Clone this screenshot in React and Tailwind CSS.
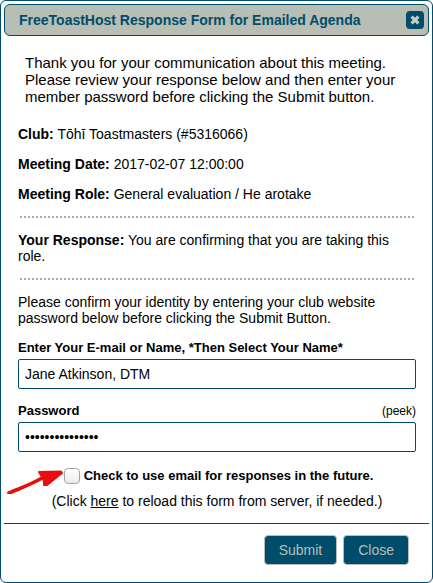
import { useState } from 'react';

const DETAILS = [
  { label: 'Club:', value: 'Tōhī Toastmasters (#5316066)' },
  { label: 'Meeting Date:', value: '2017-02-07 12:00:00' },
  { label: 'Meeting Role:', value: 'General evaluation / He arotake' },
];

function CloseIcon() {
  return (
    <svg width="12" height="12" viewBox="0 0 12 12" aria-hidden="true">
      <path d="M2.6 2.6 L9.4 9.4 M9.4 2.6 L2.6 9.4" stroke="#c9cdc5" strokeWidth="3.2" />
    </svg>
  );
}

function RedArrow() {
  return (
    <svg
      className="absolute right-full top-1/2 -translate-y-1/2"
      width="60"
      height="36"
      viewBox="0 0 60 36"
      aria-hidden="true"
    >
      <path d="M5 35 C14 31 26 27 38 20" fill="none" stroke="#e90d0d" strokeWidth="3.6" strokeLinecap="round" />
      <path
        d="M35 14 L57 13.5 L58 15 L43 27 L40 27 L40 23 L38 19 Z"
        fill="#e90d0d"
        stroke="#e90d0d"
        strokeWidth="2"
        strokeLinejoin="round"
      />
    </svg>
  );
}

function Separator() {
  return <hr className="mx-0.5 border-0 border-t-2 border-dotted border-[#aaaaaa]" />;
}

export default function App() {
  const [name, setName] = useState('Jane Atkinson, DTM');
  const [password, setPassword] = useState('toastmasters123');
  const [peek, setPeek] = useState(false);
  const [useEmail, setUseEmail] = useState(false);

  return (
    <div
      role="dialog"
      aria-labelledby="dialog-title"
      className="rounded-md border border-[#004d6b] bg-white p-[3px] font-['Liberation_Sans',Arial,sans-serif] text-sm leading-4 text-black"
    >
      <header className="flex h-8 items-center justify-between rounded-md border border-[#004d6b] bg-[#b9beb4] pr-1 pl-3.5">
        <h1 id="dialog-title" className="text-sm leading-4 font-bold text-[#004d6b]">
          FreeToastHost Response Form for Emailed Agenda
        </h1>
        <button
          type="button"
          aria-label="Close dialog"
          className="flex size-[18px] items-center justify-center rounded-sm bg-[#004d6b]"
        >
          <CloseIcon />
        </button>
      </header>

      <form onSubmit={(e) => e.preventDefault()}>
        <div className="pt-[18px] pr-[13px] pb-3.5 pl-3.5">
          <p className="px-[7px] text-[15px] leading-[17px]">
            Thank you for your communication about this meeting. Please review your response below and then enter your
            member password before clicking the Submit button.
          </p>

          <div className="mt-[21px] mb-3.5 space-y-3.5">
            {DETAILS.map((item) => (
              <p key={item.label}>
                <b>{item.label}</b> {item.value}
              </p>
            ))}
          </div>

          <Separator />
          <p className="my-3.5">
            <b>Your Response:</b> You are confirming that you are taking this role.
          </p>
          <Separator />

          <p className="my-3.5">
            Please confirm your identity by entering your club website password below before clicking the Submit Button.
          </p>

          <label htmlFor="member-name" className="block text-[13px] font-bold">
            Enter Your E-mail or Name, *Then Select Your Name*
          </label>
          <input
            id="member-name"
            type="text"
            value={name}
            onChange={(e) => setName(e.target.value)}
            className="mt-[3px] block h-[30px] w-full rounded-xs border border-[#004d6b] px-1.5 outline-none"
          />

          <div className="mt-3.5 flex items-center justify-between">
            <label htmlFor="member-password" className="text-[13px] font-bold">
              Password
            </label>
            <button type="button" onClick={() => setPeek(!peek)} className="text-xs leading-4">
              (peek)
            </button>
          </div>
          <input
            id="member-password"
            type={peek ? 'text' : 'password'}
            value={password}
            onChange={(e) => setPassword(e.target.value)}
            className="mt-[3px] block h-[30px] w-full rounded-xs border border-[#004d6b] px-1.5 outline-none"
          />

          <div className="mt-4 flex justify-center pl-[3px]">
            <div className="relative flex items-center gap-1">
              <RedArrow />
              <input
                id="use-email"
                type="checkbox"
                checked={useEmail}
                onChange={(e) => setUseEmail(e.target.checked)}
                className="size-4 appearance-none rounded-sm border border-[#a3a3a3] bg-linear-to-b from-white to-[#ececec] checked:bg-[#004d6b]"
              />
              <label htmlFor="use-email" className="text-[13px] font-bold">
                Check to use email for responses in the future.
              </label>
            </div>
          </div>
          <p className="mt-[9px] text-center">
            (Click{' '}
            <a href="#reload" className="underline">
              here
            </a>{' '}
            to reload this form from server, if needed.)
          </p>
        </div>

        <footer className="flex justify-end gap-1.5 border-t border-[#004d6b] pt-[11px] pr-5 pb-3.5">
          <button
            type="submit"
            className="h-[30px] rounded-sm border border-[#b9beb4] bg-[#004d6b] px-3.5 text-[#b9beb4]"
          >
            Submit
          </button>
          <button
            type="button"
            className="h-[30px] rounded-sm border border-[#b9beb4] bg-[#004d6b] px-3.5 text-[#b9beb4]"
          >
            Close
          </button>
        </footer>
      </form>
    </div>
  );
}
